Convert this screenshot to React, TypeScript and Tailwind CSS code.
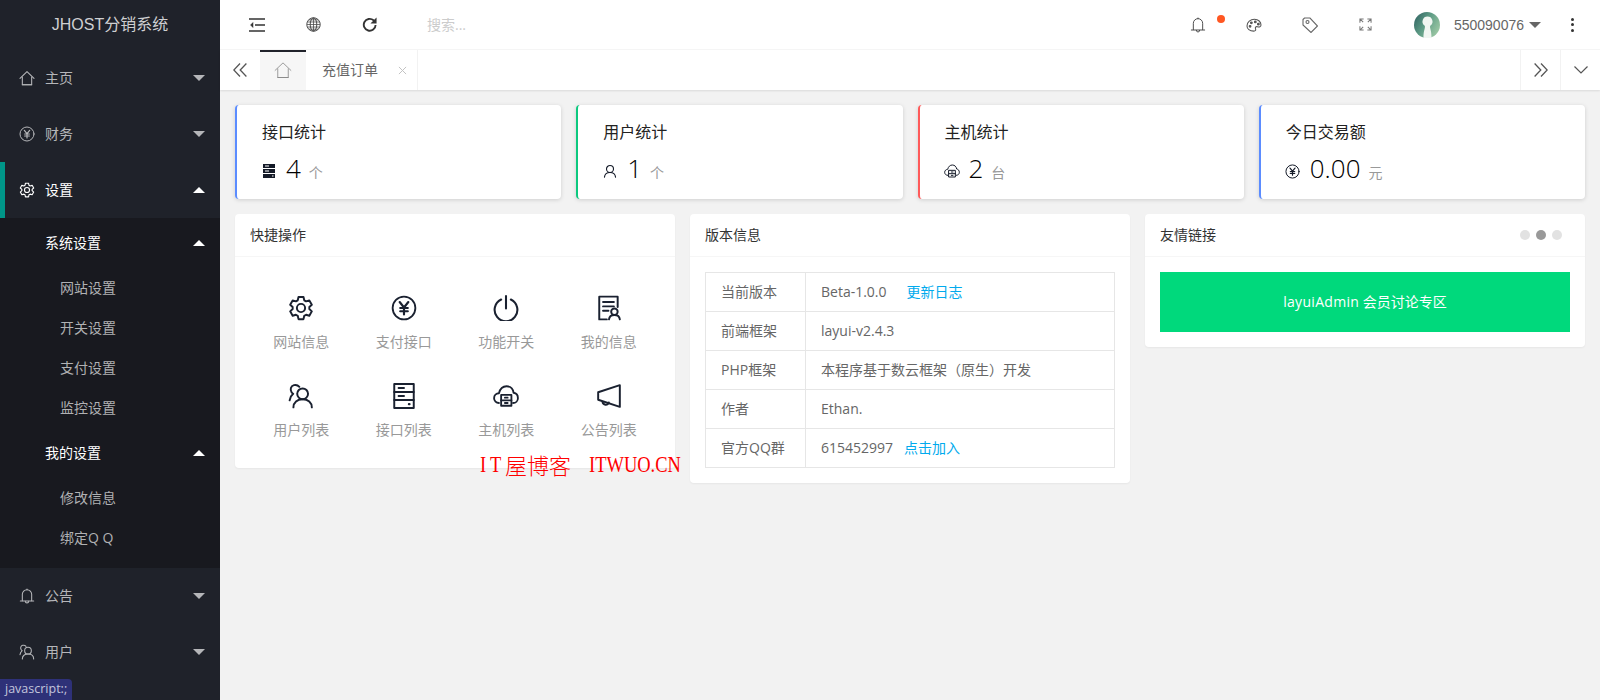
import React from "react";

const F = "font-['Open_Sans','Noto_Sans_CJK_SC',sans-serif]";
const A = "font-['Liberation_Sans','Noto_Sans_CJK_SC',sans-serif]";

type IconProps = { className?: string };
const S = ({ children, className, box = 24, sw = 1.6 }: { children: React.ReactNode; className?: string; box?: number; sw?: number }) => (
  <svg viewBox={`0 0 ${box} ${box}`} fill="none" stroke="currentColor" strokeWidth={sw} strokeLinecap="round" strokeLinejoin="round" className={`shrink-0 ${className ?? ""}`}>
    {children}
  </svg>
);

const Home = ({ className, sw }: IconProps & { sw?: number }) => (
  <S className={className} sw={sw}>
    <path d="M1.500 12.500 12 2.500l10.500 10" />
    <path d="M5 10.500V22h14V10.500" />
    <path d="M5 22h14" />
  </S>
);
const Yen = ({ className, sw = 1.7 }: IconProps & { sw?: number }) => (
  <S className={className} sw={sw}>
    <circle cx="12" cy="12" r="10.500" />
    <path d="m8 6.500 4 5 4-5M12 11.500V18M8.500 12h7M8.500 15h7" strokeWidth={sw + 0.3} />
  </S>
);
const Gear = ({ className, sw = 1.7 }: IconProps & { sw?: number }) => (
  <S className={className} sw={sw}>
    <path d="M9.700 1.800h4.600l.7 3.100 1.700 1 3-.9 2.300 4-2.300 2.100v1.900l2.300 2.100-2.300 4-3-.9-1.700 1-.7 3.100H9.700l-.7-3.100-1.700-1-3 .9-2.300-4 2.300-2.100V11.100L2 9l2.300-4 3 .9 1.700-1z" />
    <circle cx="12" cy="12" r="3.800" />
  </S>
);
const Bell = ({ className, sw = 1.6 }: IconProps & { sw?: number }) => (
  <S className={className} sw={sw}>
    <path d="M5 19V9.500a7 7 0 0 1 14 0V19" />
    <path d="M2 19.500h20" />
    <path d="M9.500 20a2.500 2.500 0 0 0 5 0" />
    <path d="M12 1.500v1" />
  </S>
);
const UserTwo = ({ className, sw = 1.7 }: IconProps & { sw?: number }) => (
  <S className={className} sw={sw}>
    <circle cx="13.500" cy="10" r="5" />
    <path d="M5 22.500c0-4.500 3.500-7.500 8.500-7.500s8.500 3 8.500 7.500" />
    <path d="M10.500 3.500A5 5 0 0 0 5.500 2c-3 .8-3.800 4-2.200 6.500.5.800 1 1.200 1.500 1.500C3 11.500 1.800 13.500 1.500 16" />
  </S>
);
const UserOne = ({ className }: IconProps) => (
  <S className={className} sw={1.9}>
    <circle cx="12" cy="8.500" r="6" />
    <path d="M2.500 22.500c.5-5 4.500-8 9.500-8s9 3 9.500 8" />
  </S>
);
const ServerSolid = ({ className }: IconProps) => (
  <svg viewBox="0 0 12 14" className={className}>
    <rect x="0" y="0" width="12" height="4" fill="currentColor" />
    <rect x="0" y="5" width="12" height="4" fill="currentColor" />
    <rect x="0" y="10" width="12" height="4" fill="currentColor" />
    <rect x="2" y="1.500" width="4" height="1" fill="#fff" />
    <rect x="2" y="6.500" width="4" height="1" fill="#fff" />
    <rect x="9" y="11.500" width="1.500" height="1" fill="#fff" />
  </svg>
);
const CloudHost = ({ className, sw = 1.7 }: IconProps & { sw?: number }) => (
  <S className={className} sw={sw}>
    <path d="M5.500 18.500C3 18.500 1 16.500 1 14s2-4.500 4.500-4.500C6.500 5.500 9 3 12.500 3c3.500 0 6 2.500 6.500 6 2.500.3 4 2.500 4 5s-2 4.500-4.500 4.500" />
    <rect x="7.500" y="11" width="9.500" height="10" />
    <path d="M7.500 16h9.500M11 13.500h2.500M11 18.500h2.500" />
  </S>
);
const Power = ({ className }: IconProps) => (
  <S className={className} sw={1.9}>
    <path d="M7.500 4.200a10.500 10.500 0 1 0 9 0" />
    <path d="M12 1v11.500" />
  </S>
);
const Cert = ({ className }: IconProps) => (
  <S className={className} sw={1.8}>
    <path d="M20 11V1.500H3v21h7" />
    <path d="M6.500 6.500h10M6.500 10.500h10M6.500 14.500h5" />
    <circle cx="17" cy="15.500" r="3" />
    <path d="M12 22.500c.3-2.600 2.300-4 5-4s4.700 1.400 5 4" />
  </S>
);
const Cabinet = ({ className }: IconProps) => (
  <S className={className} sw={1.8}>
    <rect x="3" y="1" width="18" height="22" />
    <path d="M3 8.300h18M3 15.700h18M7 4.700h5M7 12h5" />
    <path d="M16.500 19.500h.6" strokeWidth={2} />
  </S>
);
const Horn = ({ className }: IconProps) => (
  <S className={className} sw={1.8}>
    <path d="M22 2 2 8.500v7L22 22z" />
    <path d="M6 17.500a3 3 0 0 0 5.800.5" />
  </S>
);
const Caret = ({ up, className }: { up?: boolean; className?: string }) => (
  <svg viewBox="0 0 12 6" className={`h-[6px] w-3 ${className ?? ""}`}>
    <path d={up ? "M6 0l6 6H0z" : "M0 0h12L6 6z"} fill="currentColor" />
  </svg>
);

function NavItem({ label, icon, active, open }: { label: string; icon: React.ReactNode; active?: boolean; open?: boolean }) {
  return (
    <div className={`relative flex h-14 items-center pr-[15px] ${active ? "border-l-[5px] border-[#009688] pl-[14px] text-white" : "pl-[19px] text-[#b5b6b9]"}`}>
      <span className="mr-2.5 flex h-4 w-4 items-center justify-center">{icon}</span>
      <span className="flex-1 text-sm">{label}</span>
      <Caret up={open} />
    </div>
  );
}
const SubHead = ({ label }: { label: string }) => (
  <div className="flex h-[50px] items-center pl-[45px] pr-[15px] text-sm text-white">
    <span className="flex-1">{label}</span>
    <Caret up />
  </div>
);
const SubItem = ({ label }: { label: string }) => (
  <div className="flex h-10 items-center pl-[60px] text-sm text-[#b0b1b3]">{label}</div>
);

const Stat = ({ color, title, icon, value, unit }: { color: string; title: string; icon: React.ReactNode; value: string; unit: string }) => (
  <div className={`h-[94px] rounded-sm border-l-2 bg-white pl-[25px] pt-[15px] shadow-[0_1px_4px_rgba(0,0,0,0.15)] ${color}`}>
    <div className="text-base leading-6 text-[#222]">{title}</div>
    <div className="mt-1.5 flex h-9 items-center text-[#141a28]">
      <span className="mt-1.5 flex w-[14px] items-center justify-center">{icon}</span>
      <span className="ml-2.5 text-[26px] leading-9 text-black [font-weight:350]">{value}</span>
      <span className="ml-2 mt-2.5 text-sm text-[#999]">{unit}</span>
    </div>
  </div>
);

const Panel = ({ title, right, children }: { title: string; right?: React.ReactNode; children: React.ReactNode }) => (
  <div className="rounded-sm bg-white shadow-[0_1px_2px_rgba(0,0,0,0.05)]">
    <div className="flex h-[43px] items-center justify-between border-b border-[#f6f6f6] px-[15px] text-sm text-[#333]">
      <span>{title}</span>
      {right}
    </div>
    {children}
  </div>
);

const Quick = ({ icon, label }: { icon: React.ReactNode; label: string }) => (
  <div className="flex h-[88px] flex-col items-center">
    <div className="flex h-[30px] items-center justify-center text-[#1a2130]">{icon}</div>
    <div className="mt-2 h-[21px] text-sm leading-[21px] text-[#999]">{label}</div>
  </div>
);

const Row = ({ label, children }: { label: string; children: React.ReactNode }) => (
  <div className="flex h-[39px] items-center border-b border-[#e6e6e6] text-sm text-[#666] last:h-[38px] last:border-b-0">
    <div className="flex h-full w-[100px] items-center border-r border-[#e6e6e6] pl-[15px]">{label}</div>
    <div className="flex items-center pl-[15px]">{children}</div>
  </div>
);

export default function App() {
  return (
    <div className={`relative flex h-[700px] w-[1600px] overflow-hidden bg-[#f2f2f2] ${F}`}>
      <aside className="flex w-[220px] shrink-0 flex-col bg-[#1f222a]">
        <div className={`flex h-[50px] items-center justify-center text-base text-[#cfd0d2] ${A}`}>JHOST分销系统</div>
        <NavItem label="主页" icon={<Home className="h-4 w-4" />} />
        <NavItem label="财务" icon={<Yen className="h-4 w-4" sw={1.500} />} />
        <NavItem label="设置" active open icon={<Gear className="h-4 w-4" />} />
        <div className="bg-[#18191f] pb-2.5">
          <SubHead label="系统设置" />
          <SubItem label="网站设置" />
          <SubItem label="开关设置" />
          <SubItem label="支付设置" />
          <SubItem label="监控设置" />
          <SubHead label="我的设置" />
          <SubItem label="修改信息" />
          <SubItem label="绑定Q Q" />
        </div>
        <NavItem label="公告" icon={<Bell className="h-4 w-4" />} />
        <NavItem label="用户" icon={<UserTwo className="h-4 w-4" sw={1.600} />} />
      </aside>

      <main className="flex min-w-0 flex-1 flex-col">
        <header className="flex h-[50px] items-center border-b border-[#f6f6f6] bg-white text-[#333]">
          <span className="ml-[29px] flex w-4 justify-center">
            <svg viewBox="0 0 16 14" className="h-[14px] w-4" fill="none" stroke="currentColor" strokeWidth="1.300">
              <path d="M0 1h16M6 7h10M0 13h16" />
              <path d="M4 4.500 1.500 7 4 9.500z" fill="currentColor" strokeWidth="0.500" />
            </svg>
          </span>
          <span className="ml-[40px] flex w-4 justify-center text-[#444]">
            <svg viewBox="0 0 16 16" className="h-[15px] w-[15px]" fill="none" stroke="currentColor" strokeWidth="1">
              <circle cx="8" cy="8" r="7.200" />
              <ellipse cx="8" cy="8" rx="3.500" ry="7" />
              <path d="M1 8h14M1.500 5.300h13M1.500 10.700h13M3 3h10M3 13h10M8 1v14" strokeWidth="0.800" />
            </svg>
          </span>
          <span className="ml-[40px] flex w-4 justify-center">
            <svg viewBox="0 0 16 16" className="h-[15px] w-[15px]" fill="none" stroke="currentColor" strokeWidth="2">
              <path d="M14.500 8.500A6.300 6.300 0 1 1 12.300 3.500L14 5.200" />
              <path d="M15.500.5V7H9z" fill="currentColor" stroke="none" />
            </svg>
          </span>
          <span className="ml-[50px] text-sm text-[#ccc]">搜索...</span>
          <div className="ml-auto flex items-center">
            <span className="relative flex w-4 justify-center text-[#444]">
              <Bell className="h-[16px] w-[16px]" sw={1.400} />
              <span className="absolute left-[27px] top-[-2px] h-2 w-2 rounded-full bg-[#ff5722]" />
            </span>
            <span className="ml-10 flex w-4 justify-center text-[#555]">
              <svg viewBox="0 0 18 16" className="h-[14px] w-4" fill="none" stroke="currentColor" strokeWidth="1.200">
                <path d="M1 9c0-4.500 4-7.500 8.500-7.500S17 4.500 17 8c0 2-2 2.500-4 2-2-.5-3 .8-2.200 2.500.6 1.500-.3 2.500-2 2.500C4 15 1 12.500 1 9z" />
                <circle cx="6" cy="5.500" r="1" fill="currentColor" />
                <circle cx="10.500" cy="4.500" r="1" fill="currentColor" />
                <circle cx="14" cy="7" r="1" fill="currentColor" />
                <circle cx="4.500" cy="9.500" r="1" fill="currentColor" />
              </svg>
            </span>
            <span className="ml-10 flex w-4 justify-center text-[#666]">
              <svg viewBox="0 0 16 16" className="h-[16px] w-[16px]" fill="none" stroke="currentColor" strokeWidth="1.100">
                <path d="M1 2.500 2.500 1H8l7.500 8L9 15.500 1 8z" />
                <circle cx="5.500" cy="5" r="1.500" />
              </svg>
            </span>
            <span className="ml-10 flex w-4 justify-center text-[#777]">
              <svg viewBox="0 0 14 14" className="h-[13px] w-[13px]" fill="none" stroke="currentColor" strokeWidth="1.100">
                <path d="M1 5V1h4M1 1l3.500 3.500M9 1h4v4M13 1 9.500 4.500M1 9v4h4M1 13l3.500-3.500M13 9v4H9M13 13 9.500 9.500" />
              </svg>
            </span>
            <span className="ml-[40px]">
              <svg viewBox="0 0 26 26" className="block h-[26px] w-[26px]">
                <defs>
                  <linearGradient id="av" x1="0" y1="0" x2="1" y2="0.600">
                    <stop offset="0" stopColor="#2b5c5e" />
                    <stop offset="0.500" stopColor="#5c9a84" />
                    <stop offset="1" stopColor="#98c5a2" />
                  </linearGradient>
                </defs>
                <circle cx="13" cy="13" r="13" fill="url(#av)" />
                <path d="M13.500 4.500a5 5 0 0 1 3 9c-.6.500-.6 1.500-.2 3 .4 1.700 1.200 4 1.200 9.500h-8c0-5.500.8-7.800 1.200-9.500.4-1.500.4-2.500-.2-3a5 5 0 0 1 3-9z" fill="#f1f6f2" />
              </svg>
            </span>
            <span className={`ml-[14px] text-sm text-[#666] ${A}`}>550090076</span>
            <Caret className="ml-[5px] text-[#666]" />
            <span className="ml-[30px] mr-[26px] flex h-[14px] w-[3px] flex-col justify-between">
              <i className="block h-[3px] w-[3px] rounded-full bg-[#333]" />
              <i className="block h-[3px] w-[3px] rounded-full bg-[#333]" />
              <i className="block h-[3px] w-[3px] rounded-full bg-[#333]" />
            </span>
          </div>
        </header>

        <div className="flex h-10 items-stretch bg-white text-sm text-[#666] shadow-[0_1px_2px_rgba(0,0,0,0.1)]">
          <span className="flex w-10 items-center justify-center">
            <svg viewBox="0 0 14 14" className="h-[14px] w-[14px]" fill="none" stroke="#555" strokeWidth="1.300">
              <path d="M7 .5.800 7 7 13.500M13.400.5 7.200 7l6.200 6.500" />
            </svg>
          </span>
          <span className="flex w-[46px] items-center justify-center border-t-2 border-[#20222a] bg-[#f6f6f6] pb-0.5 text-[#888]">
            <Home className="h-[18px] w-[18px]" sw={1.100} />
          </span>
          <span className="flex w-[112px] items-center border-r border-[#f2f2f2] pl-4">
            <span>充值订单</span>
            <svg viewBox="0 0 10 10" className="ml-[20px] h-[9px] w-[9px]" fill="none" stroke="#c2c2c2" strokeWidth="1.100">
              <path d="m1 1 8 8M9 1 1 9" />
            </svg>
          </span>
          <span className="ml-auto flex w-10 items-center justify-center border-l border-[#f2f2f2]">
            <svg viewBox="0 0 14 14" className="h-[14px] w-[14px]" fill="none" stroke="#555" strokeWidth="1.300">
              <path d="M.6.500 6.800 7 .6 13.500M7 .5 13.200 7 7 13.500" />
            </svg>
          </span>
          <span className="flex w-10 items-center justify-center border-l border-[#f2f2f2]">
            <svg viewBox="0 0 14 8" className="h-2 w-[14px]" fill="none" stroke="#555" strokeWidth="1.200">
              <path d="m.5.500 6.500 6.500 6.500-6.500" />
            </svg>
          </span>
        </div>

        <div className="p-[15px]">
          <div className="grid grid-cols-4 gap-[15px]">
            <Stat color="border-[#5b8cff]" title="接口统计" icon={<ServerSolid className="h-[14px] w-3" />} value="4" unit="个" />
            <Stat color="border-[#0cc97f]" title="用户统计" icon={<UserOne className="h-[14px] w-[14px]" />} value="1" unit="个" />
            <Stat color="border-[#ff5a5a]" title="主机统计" icon={<CloudHost className="h-4 w-4" sw={1.500} />} value="2" unit="台" />
            <Stat color="border-[#5b8cff]" title="今日交易额" icon={<Yen className="h-[15px] w-[15px]" sw={1.600} />} value="0.00" unit="元" />
          </div>
          <div className="mt-[15px] grid grid-cols-3 items-start gap-[15px]">
            <Panel title="快捷操作">
              <div className="grid h-[211px] grid-cols-4 content-start px-[15px] pt-9">
                <Quick icon={<Gear className="h-[26px] w-[26px]" sw={1.800} />} label="网站信息" />
                <Quick icon={<Yen className="h-[26px] w-[26px]" sw={1.700} />} label="支付接口" />
                <Quick icon={<Power className="h-[26px] w-[26px]" />} label="功能开关" />
                <Quick icon={<Cert className="h-[26px] w-[26px]" />} label="我的信息" />
                <Quick icon={<UserTwo className="h-[26px] w-[26px]" sw={1.800} />} label="用户列表" />
                <Quick icon={<Cabinet className="h-[26px] w-[26px]" />} label="接口列表" />
                <Quick icon={<CloudHost className="h-[26px] w-[26px]" />} label="主机列表" />
                <Quick icon={<Horn className="h-[26px] w-[26px]" />} label="公告列表" />
              </div>
            </Panel>
            <Panel title="版本信息">
              <div className="p-[15px]">
                <div className="border border-[#e6e6e6]">
                  <Row label="当前版本">
                    <span>Beta-1.0.0</span>
                    <span className="ml-5 text-[#01aaed]">更新日志</span>
                  </Row>
                  <Row label="前端框架">layui-v2.4.3</Row>
                  <Row label="PHP框架">本程序基于数云框架（原生）开发</Row>
                  <Row label="作者">Ethan.</Row>
                  <Row label="官方QQ群">
                    <span>615452997</span>
                    <span className="ml-[11px] text-[#01aaed]">点击加入</span>
                  </Row>
                </div>
              </div>
            </Panel>
            <Panel
              title="友情链接"
              right={
                <span className="mr-[8px] flex gap-1.5">
                  <i className="block h-2.5 w-2.5 rounded-full bg-[#e2e2e2]" />
                  <i className="block h-2.5 w-2.5 rounded-full bg-[#999]" />
                  <i className="block h-2.5 w-2.5 rounded-full bg-[#e2e2e2]" />
                </span>
              }
            >
              <div className="p-[15px]">
                <div className="flex h-[60px] items-center justify-center bg-[#00d97c] text-sm text-white">
                  <span className="tracking-[0.300px]">layuiAdmin</span>&nbsp;会员讨论专区
                </div>
              </div>
            </Panel>
          </div>
        </div>
      </main>

      <div className="absolute left-[480px] top-[450px] flex h-7 items-center whitespace-nowrap text-[#f00]">
        <span className="w-[25px] origin-left scale-x-[0.77] font-['Liberation_Serif',serif] text-[24px] tracking-[5px]">IT</span>
        <span className="w-[84px] font-['Noto_Sans_CJK_SC',sans-serif] text-[22px] font-light tracking-px">屋博客</span>
        <span className="origin-left scale-x-[0.77] font-['Liberation_Serif',serif] text-[24px]">ITWUO.CN</span>
      </div>
      <div className="absolute bottom-0 left-0 flex h-[21px] w-[72px] items-center rounded-tr-sm bg-[#2e3178] pl-[5px] text-[12.500px] text-[#c3c5dc]">
        javascript:;
      </div>
    </div>
  );
}
